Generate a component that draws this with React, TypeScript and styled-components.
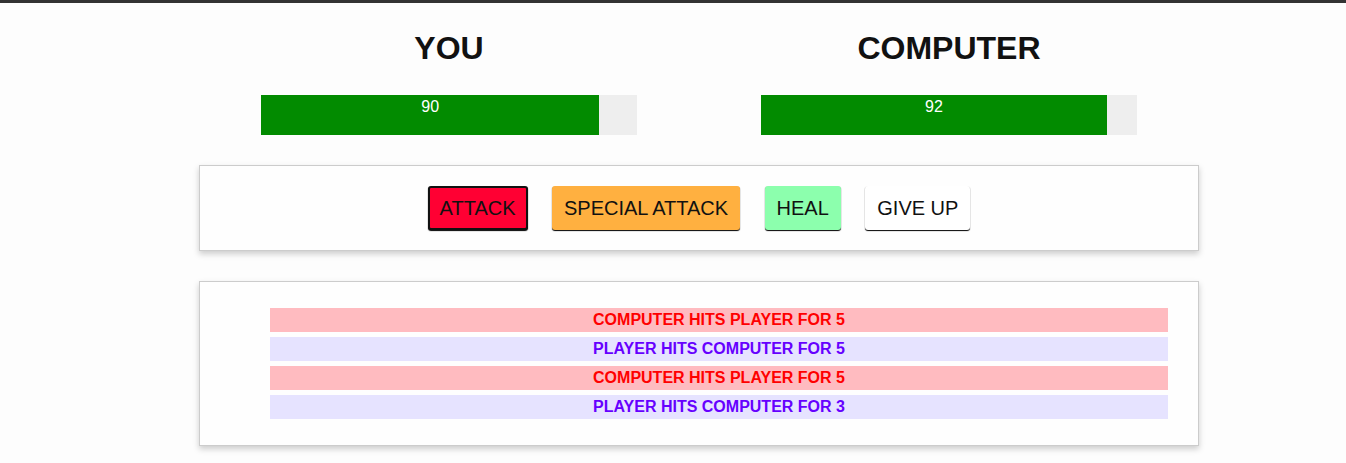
import React from "react";
import styled, { createGlobalStyle } from "styled-components";

const GlobalStyle = createGlobalStyle`
  html, body { margin: 0; padding: 0; }
  body {
    background: #fdfdfd;
    font-family: "Liberation Sans", Arial, sans-serif;
    color: #111;
    border-top: 3px solid #333;
  }
`;

const Page = styled.div`
  width: 1000px;
  margin-left: 199px;
  padding-bottom: 20px;
`;

const Row = styled.section`
  display: grid;
  grid-template-columns: 1fr 1fr;
`;

const Column = styled.div`
  padding: 0 15px;
  text-align: center;
`;

const Title = styled.h1`
  font-size: 32px;
  font-weight: bold;
  margin: 27px 0 28px;
  line-height: 37px;
`;

const Track = styled.div`
  width: 80%;
  height: 40px;
  margin: 0 auto;
  background: #eee;
`;

const Fill = styled.div`
  height: 100%;
  background: #028b00;
  color: #fff;
  font-size: 16px;
  line-height: 24px;
  text-align: center;
`;

const Panel = styled.section<{ $top: number }>`
  margin-top: ${(p) => p.$top}px;
  border: 1px solid #ccc;
  box-shadow: 0 3px 6px #ccc;
  background: #fefefe;
  padding: 10px;
  text-align: center;
`;

const Button = styled.button<{ $bg: string; $focused?: boolean }>`
  font-family: "Liberation Sans", Arial, sans-serif;
  font-size: 20px;
  line-height: 20px;
  color: #111;
  background: ${(p) => p.$bg};
  padding: ${(p) => (p.$focused ? "10px" : "12px")};
  margin: 10px;
  border: ${(p) => (p.$focused ? "2px solid #111" : "none")};
  border-radius: 3px;
  box-shadow: 0 1px 1px #000;
  cursor: pointer;
`;

const LogList = styled.ul`
  list-style: none;
  margin: 16px 0;
  padding: 0 0 0 40px;
`;

const LogItem = styled.li<{ $player: boolean }>`
  margin: 5px 20px;
  padding: 3px 0;
  line-height: 18px;
  font-size: 16px;
  font-weight: bold;
  color: ${(p) => (p.$player ? "#6600ff" : "#ff0000")};
  background: ${(p) => (p.$player ? "#e6e3ff" : "#ffbbc0")};
`;

const fighters = [
  { name: "YOU", health: 90 },
  { name: "COMPUTER", health: 92 },
];

const logs = [
  { player: false, text: "COMPUTER HITS PLAYER FOR 5" },
  { player: true, text: "PLAYER HITS COMPUTER FOR 5" },
  { player: false, text: "COMPUTER HITS PLAYER FOR 5" },
  { player: true, text: "PLAYER HITS COMPUTER FOR 3" },
];

export default function App() {
  return (
    <>
      <GlobalStyle />
      <Page>
        <Row>
          {fighters.map((f) => (
            <Column key={f.name}>
              <Title>{f.name}</Title>
              <Track>
                <Fill style={{ width: `${f.health}%` }}>{f.health}</Fill>
              </Track>
            </Column>
          ))}
        </Row>
        <Panel $top={30}>
          <Button $bg="#ff0033" $focused>ATTACK</Button>{" "}
          <Button $bg="#ffb040">SPECIAL ATTACK</Button>{" "}
          <Button $bg="#8cffad">HEAL</Button>{" "}
          <Button $bg="#ffffff">GIVE UP</Button>
        </Panel>
        <Panel $top={30}>
          <LogList>
            {logs.map((l, i) => (
              <LogItem key={i} $player={l.player}>
                {l.text}
              </LogItem>
            ))}
          </LogList>
        </Panel>
      </Page>
    </>
  );
}
